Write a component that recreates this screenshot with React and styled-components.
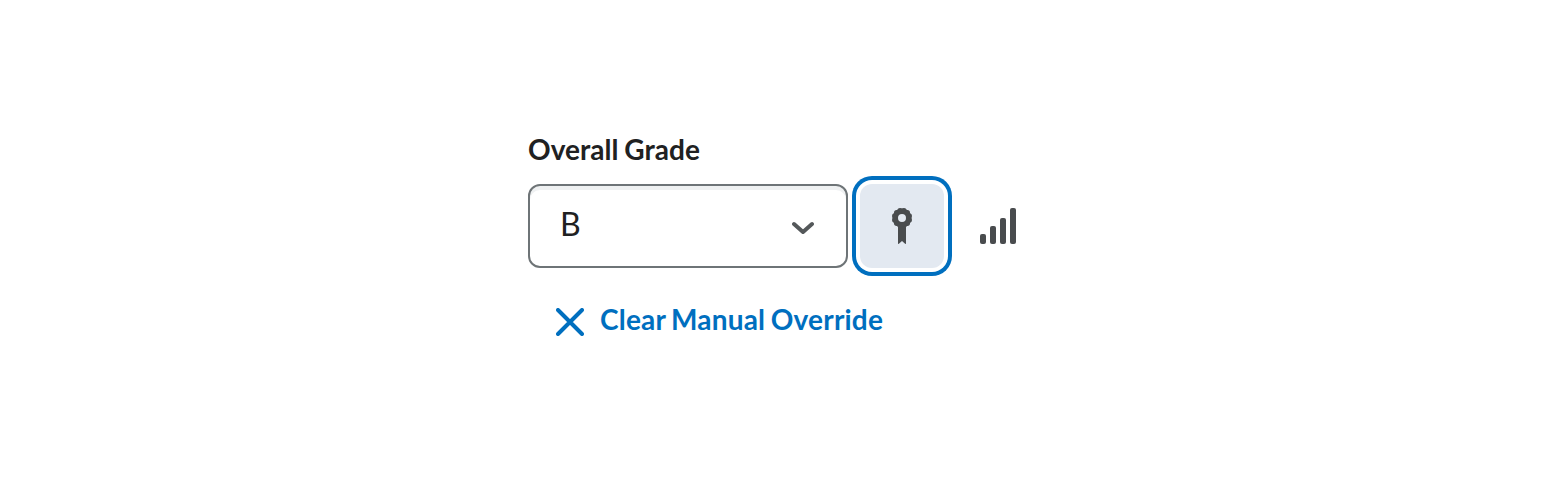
import React from "react";
import styled, { createGlobalStyle } from "styled-components";

const GlobalStyle = createGlobalStyle`
  *, *::before, *::after { box-sizing: border-box; }
  body {
    margin: 0;
    background: #ffffff;
    color: #202122;
    font-family: Lato, "Open Sans", sans-serif;
  }
`;

const Page = styled.main`
  min-height: 484px;
  padding: 128px 528px 0;
  background: #ffffff;
`;

const Label = styled.label`
  display: block;
  height: 56px;
  font-size: 28px;
  line-height: 42px;
  font-weight: 700;
  letter-spacing: 0.03px;
  word-spacing: -1px;
  white-space: nowrap;
`;

const Controls = styled.div`
  display: flex;
  align-items: center;
  width: 512px;
`;

const Select = styled.button`
  display: flex;
  align-items: center;
  justify-content: space-between;
  width: 320px;
  height: 84px;
  margin: 0 12px 0 0;
  padding: 0 32px 0 30px;
  border: 2px solid #6e7477;
  border-radius: 12px;
  background: #ffffff;
  box-shadow: inset 0 4px 0 0 #eff1f2;
  color: #202122;
  font-family: inherit;
`;

const Value = styled.span`
  font-size: 32px;
  line-height: 48px;
  font-weight: 400;
  padding-bottom: 4px;
`;

const IconButton = styled.button`
  display: flex;
  align-items: center;
  justify-content: center;
  width: 84px;
  height: 84px;
  margin: 0;
  padding: 0;
  border: 0;
  border-radius: 12px;
  background: ${({ $active }) => ($active ? "#e3e9f1" : "transparent")};
  box-shadow: ${({ $active }) =>
    $active ? "0 0 0 4px #ffffff, 0 0 0 8px #006fbf" : "none"};
  & + & { margin-left: 12px; }
`;

const ClearButton = styled.button`
  display: flex;
  align-items: center;
  gap: 16px;
  height: 84px;
  margin: 12px 0 0;
  padding: 0 28px;
  border: 0;
  background: transparent;
  color: #006fbf;
  font-family: inherit;
`;

const ClearText = styled.span`
  font-size: 28px;
  line-height: 40px;
  font-weight: 700;
  letter-spacing: 0.2px;
  word-spacing: -1.5px;
  padding-bottom: 6px;
  white-space: nowrap;
`;

const Icon = styled.svg`
  display: block;
  flex: none;
`;

const ChevronIcon = styled(Icon)`
  margin-top: 4px;
`;

const Chevron = () => (
  <ChevronIcon width="22" height="14" viewBox="0 0 22 14">
    <path d="M2 3 L11 11 L20 3" fill="none" stroke="#54585a" strokeWidth="4" strokeLinecap="round" strokeLinejoin="round" />
  </ChevronIcon>
);

const lobes = Array.from({ length: 12 }, (_, i) => {
  const angle = ((i + 0.5) * Math.PI) / 6;
  return [18 + 7.5 * Math.cos(angle), 10 + 7.5 * Math.sin(angle)];
});

const Ribbon = () => (
  <Icon width="36" height="36" viewBox="0 0 36 36">
    <circle cx="18" cy="10" r="6.7" fill="none" stroke="#494c4e" strokeWidth="5.4" />
    {lobes.map(([x, y]) => (
      <circle key={`${x}-${y}`} cx={x} cy={y} r="2.7" fill="#494c4e" />
    ))}
    <path d="M14 16H22V35.2Q22 36.3 21.1 35.7L18 33L14.9 35.7Q14 36.3 14 35.2Z" fill="#494c4e" />
  </Icon>
);

const Bars = () => (
  <Icon width="36" height="36" viewBox="0 0 36 36" fill="#494c4e">
    <rect x="0" y="26" width="6" height="10" rx="2" />
    <rect x="10" y="18" width="6" height="18" rx="2" />
    <rect x="20" y="10" width="6" height="26" rx="2" />
    <rect x="30" y="0" width="6" height="36" rx="2" />
  </Icon>
);

const Cross = () => (
  <Icon width="28" height="28" viewBox="0 0 28 28">
    <path d="M2 2L26 26M26 2L2 26" fill="none" stroke="#006fbf" strokeWidth="4" strokeLinecap="round" />
  </Icon>
);

export default function App() {
  return (
    <>
      <GlobalStyle />
      <Page>
        <Label htmlFor="grade">Overall Grade</Label>
        <Controls>
          <Select id="grade" type="button">
            <Value>B</Value>
            <Chevron />
          </Select>
          <IconButton type="button" $active aria-label="Grade awards">
            <Ribbon />
          </IconButton>
          <IconButton type="button" aria-label="Statistics">
            <Bars />
          </IconButton>
        </Controls>
        <ClearButton type="button">
          <Cross />
          <ClearText>Clear Manual Override</ClearText>
        </ClearButton>
      </Page>
    </>
  );
}
